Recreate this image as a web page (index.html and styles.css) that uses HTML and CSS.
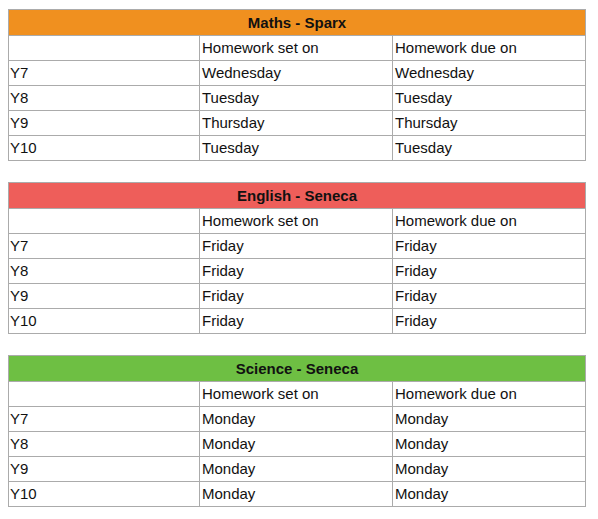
FILE: index.html
```html
<!DOCTYPE html>
<html>
<head>
<meta charset="utf-8">
<link rel="stylesheet" href="styles.css">
</head>
<body>
<div class="stack">
  <table class="hw">
    <colgroup><col class="c1"><col class="c2"><col class="c3"></colgroup>
    <tr><th colspan="3" class="head maths">Maths - Sparx</th></tr>
    <tr><td></td><td>Homework set on</td><td>Homework due on</td></tr>
    <tr><td>Y7</td><td>Wednesday</td><td>Wednesday</td></tr>
    <tr><td>Y8</td><td>Tuesday</td><td>Tuesday</td></tr>
    <tr><td>Y9</td><td>Thursday</td><td>Thursday</td></tr>
    <tr><td>Y10</td><td>Tuesday</td><td>Tuesday</td></tr>
  </table>
  <table class="hw">
    <colgroup><col class="c1"><col class="c2"><col class="c3"></colgroup>
    <tr><th colspan="3" class="head english">English - Seneca</th></tr>
    <tr><td></td><td>Homework set on</td><td>Homework due on</td></tr>
    <tr><td>Y7</td><td>Friday</td><td>Friday</td></tr>
    <tr><td>Y8</td><td>Friday</td><td>Friday</td></tr>
    <tr><td>Y9</td><td>Friday</td><td>Friday</td></tr>
    <tr><td>Y10</td><td>Friday</td><td>Friday</td></tr>
  </table>
  <table class="hw">
    <colgroup><col class="c1"><col class="c2"><col class="c3"></colgroup>
    <tr><th colspan="3" class="head science">Science - Seneca</th></tr>
    <tr><td></td><td>Homework set on</td><td>Homework due on</td></tr>
    <tr><td>Y7</td><td>Monday</td><td>Monday</td></tr>
    <tr><td>Y8</td><td>Monday</td><td>Monday</td></tr>
    <tr><td>Y9</td><td>Monday</td><td>Monday</td></tr>
    <tr><td>Y10</td><td>Monday</td><td>Monday</td></tr>
  </table>
</div>
</body>
</html>
```

FILE: styles.css
```css
html, body {
  margin: 0;
  padding: 0;
  background: #ffffff;
}
body {
  font-family: "Liberation Sans", Arial, sans-serif;
  font-size: 15px;
  color: #111111;
}
.stack {
  display: flex;
  flex-direction: column;
  gap: 21px;
  padding: 9px 0 0 8px;
}
.hw {
  border-collapse: collapse;
  table-layout: fixed;
  width: 577px;
}
.c1 { width: 191px; }
.c2 { width: 193px; }
.c3 { width: 193px; }
.hw td, .hw th {
  border: 1px solid #ababab;
  padding: 0 0 0 2px;
  height: 24px;
  line-height: 24px;
  text-align: left;
  white-space: nowrap;
  overflow: hidden;
  box-sizing: border-box;
}
.hw td:first-child {
  padding-left: 1px;
}
.hw th.head {
  height: 25px;
  text-align: center;
  font-weight: bold;
  padding: 0;
  line-height: 25px;
}
.maths { background: #f0901f; }
.english { background: #ee5e5a; }
.science { background: #6ebf43; }
```
